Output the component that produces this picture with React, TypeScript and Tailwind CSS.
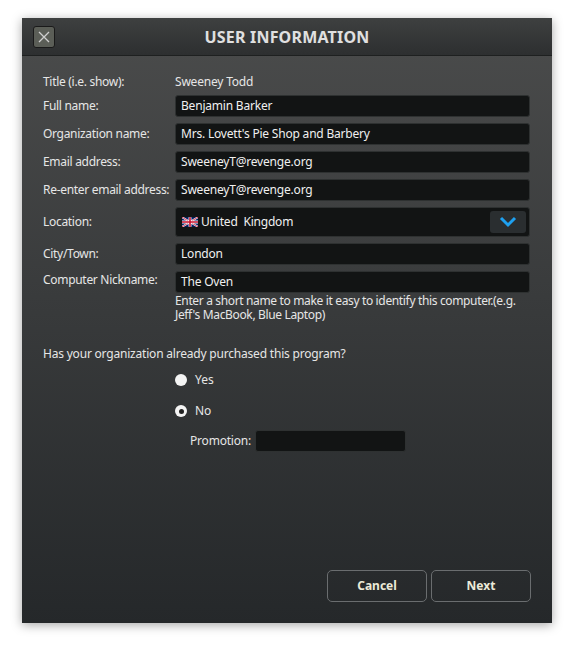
import React from "react";

const F = { fontFamily: '"Noto Sans", "Open Sans", sans-serif' };

function Field({ v }: { v: string }) {
  return (
    <div className="h-[22px] w-[355px] rounded-[3px] bg-[#121414] border border-[#2e3131] px-[5px] text-[12px] leading-[20px] tracking-[-0.2px] text-[#f0f0f0]">
      {v}
    </div>
  );
}

function Row({ label, children, top = "items-center" }: { label: string; children: React.ReactNode; top?: string }) {
  return (
    <div className={`flex ${top}`}>
      <div className="w-[132px] whitespace-nowrap text-[12px] tracking-[-0.3px] text-[#e6e6e6]">{label}</div>
      {children}
    </div>
  );
}

function Flag() {
  return (
    <svg width="16" height="10" viewBox="0 0 60 36">
      <rect width="60" height="36" fill="#012169" />
      <path d="M0 0L60 36M60 0L0 36" stroke="#fff" strokeWidth="7" />
      <path d="M0 0L60 36M60 0L0 36" stroke="#C8102E" strokeWidth="3" />
      <path d="M30 0V36M0 18H60" stroke="#fff" strokeWidth="11" />
      <path d="M30 0V36M0 18H60" stroke="#C8102E" strokeWidth="6" />
    </svg>
  );
}

export default function App() {
  return (
    <div className="w-[574px] h-[650px] bg-white pt-[18px] pl-[22px]" style={F}>
      <div className="w-[530px] h-[605px] flex flex-col shadow-[0_2px_10px_rgba(0,0,0,0.35)] bg-gradient-to-b from-[#4b4c4c] to-[#25282a]">
        <div className="h-[38px] flex items-center px-[11px] bg-gradient-to-b from-[#3e4040] to-[#2d2f30] border-b border-[#1e2020] relative">
          <div className="w-[22px] h-[22px] rounded-[3px] border border-[#1a1a1a] bg-[#5b5e57] flex items-center justify-center">
            <svg width="14" height="14" viewBox="0 0 14 14"><path d="M2 2L12 12M12 2L2 12" stroke="#cfcfcf" strokeWidth="1.3" /></svg>
          </div>
          <div className="absolute inset-0 flex items-center justify-center text-[16px] font-bold text-[#e0e0e0] tracking-[0.2px]">USER INFORMATION</div>
        </div>
        <div className="flex flex-col pl-[21px] pt-[17px]">
          <Row label="Title (i.e. show):"><div className="text-[12px] tracking-[-0.2px] text-[#e6e6e6] h-[18px] leading-[18px]">Sweeney Todd</div></Row>
          <div className="flex flex-col gap-[6px] mt-[4px]">
            <Row label="Full name:"><Field v="Benjamin Barker" /></Row>
            <Row label="Organization name:"><Field v="Mrs. Lovett's Pie Shop and Barbery" /></Row>
            <Row label="Email address:"><Field v="SweeneyT@revenge.org" /></Row>
            <Row label="Re-enter email address:"><Field v="SweeneyT@revenge.org" /></Row>
            <Row label="Location:">
              <div className="h-[30px] w-[355px] rounded-[3px] bg-[#121414] border border-[#2e3131] pl-[6px] pr-[3px] flex items-center gap-[3px] text-[12px] tracking-[-0.2px] text-[#f0f0f0]">
                <Flag /><span>United&nbsp; Kingdom</span>
                <div className="ml-auto w-[36px] h-[22px] rounded-[3px] bg-[#2a2e30] flex items-center justify-center">
                  <svg width="18" height="12" viewBox="0 0 18 12"><path d="M2 2L9 9L16 2" stroke="#1ea0f0" strokeWidth="3" fill="none" /></svg>
                </div>
              </div>
            </Row>
            <Row label="City/Town:"><Field v="London" /></Row>
            <Row label="Computer Nickname:" top="items-start">
              <div className="flex flex-col">
                <Field v="The Oven" />
                <div className="w-[362px] text-[12px] leading-[14px] tracking-[-0.35px] text-[#e6e6e6] mt-[1px]">Enter a short name to make it easy to identify this computer.(e.g. Jeff's MacBook, Blue Laptop)</div>
              </div>
            </Row>
          </div>
          <div className="mt-[23px] text-[12px] tracking-[-0.2px] text-[#e6e6e6]">Has your organization already purchased this program?</div>
          <div className="flex flex-col gap-[13px] pl-[132px] mt-[8px]">
            <div className="flex items-center gap-[8px] text-[12px] text-[#e6e6e6]">
              <div className="w-[12px] h-[12px] rounded-full bg-[#f4f4f4]" />Yes
            </div>
            <div className="flex items-center gap-[8px] text-[12px] text-[#e6e6e6]">
              <div className="w-[12px] h-[12px] rounded-full bg-[#f4f4f4] flex items-center justify-center"><div className="w-[5px] h-[5px] rounded-full bg-[#222]" /></div>No
            </div>
          </div>
          <div className="flex items-center pl-[147px] mt-[10px] gap-[4px]">
            <span className="text-[12px] tracking-[-0.2px] text-[#e6e6e6]">Promotion:</span>
            <div className="h-[22px] w-[151px] rounded-[3px] bg-[#121414] border border-[#2e3131]" />
          </div>
        </div>
        <div className="mt-auto flex justify-end gap-[4px] pr-[21px] pb-[21px]">
          {["Cancel", "Next"].map((t) => (
            <div key={t} className="w-[100px] h-[32px] rounded-[5px] border border-[#6a6d6f] flex items-center justify-center text-[12px] font-bold text-[#ecead8]">{t}</div>
          ))}
        </div>
      </div>
    </div>
  );
}
